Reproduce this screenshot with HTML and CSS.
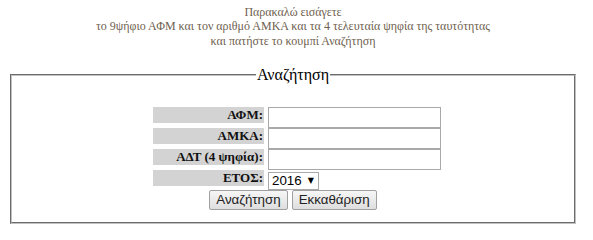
FILE: index.html
```html
<!DOCTYPE html>
<html lang="el">
<head>
<meta charset="utf-8">
<title>Αναζήτηση</title>
<link rel="stylesheet" href="styles.css">
</head>
<body>
<div class="page">
  <div class="intro">
    <div class="intro-line">Παρακαλώ εισάγετε</div>
    <div class="intro-line">το 9ψήφιο ΑΦΜ και τον αριθμό ΑΜΚΑ και τα 4 τελευταία ψηφία της ταυτότητας</div>
    <div class="intro-line intro-last">και πατήστε το κουμπί Αναζήτηση</div>
  </div>
  <fieldset class="search">
    <legend class="search-title">Αναζήτηση</legend>
    <form class="form-grid">
      <div class="label">ΑΦΜ:</div>
      <input class="field" type="text">
      <div class="label">ΑΜΚΑ:</div>
      <input class="field" type="text">
      <div class="label">ΑΔΤ (4 ψηφία):</div>
      <input class="field" type="text">
      <div class="label">ΕΤΟΣ:</div>
      <div class="select-cell">
        <span class="select-wrap">
          <select class="year">
            <option>2016</option>
            <option>2015</option>
            <option>2014</option>
          </select>
          <span class="select-arrow">▼</span>
        </span>
      </div>
      <div class="buttons">
        <button class="btn" type="submit">Αναζήτηση</button>
        <button class="btn" type="reset">Εκκαθάριση</button>
      </div>
    </form>
  </fieldset>
</div>
</body>
</html>
```
FILE: styles.css
```css
html, body {
  margin: 0;
  padding: 0;
  background: #ffffff;
}
body {
  padding: 5px 0 0 8px;
  font-family: "Liberation Serif", "Times New Roman", serif;
}
.page {
  width: 570px;
}
.intro {
  text-align: center;
  color: #6f5f50;
  font-size: 12px;
  line-height: 14px;
}
.intro-line {
  white-space: nowrap;
}
.intro-last {
  margin-top: 1px;
}
.search {
  margin: 18px 2px 0 2px;
  padding: 0 0 12px 0;
  border: 2px groove #c0c0c0;
  min-width: 0;
}
.search-title {
  margin: 0 auto;
  padding: 0 1px;
  font-size: 16px;
  line-height: 18px;
  color: #000000;
}
.form-grid {
  display: grid;
  grid-template-columns: 111px 173px;
  column-gap: 4px;
  justify-content: center;
  padding: 23px 0 0 8px;
  margin: 0;
}
.label {
  background: #d3d3d3;
  height: 16px;
  align-self: start;
  text-align: right;
  font-weight: bold;
  font-size: 13px;
  line-height: 16px;
  padding-right: 1px;
  color: #111111;
  white-space: nowrap;
}
.field {
  box-sizing: border-box;
  width: 173px;
  height: 21px;
  margin: 0;
  border: 1px solid #a9a9a9;
  border-radius: 0;
  padding: 1px 2px;
  font-family: "Liberation Sans", Arial, sans-serif;
  font-size: 13px;
  background: #ffffff;
}
.select-cell {
  padding-top: 1px;
  height: 18px;
}
.select-wrap {
  position: relative;
  display: inline-block;
}
.year {
  appearance: none;
  -webkit-appearance: none;
  box-sizing: border-box;
  width: 51px;
  height: 18px;
  margin: 0;
  padding: 0 0 0 3px;
  border: 1px solid #a9a9a9;
  border-radius: 0;
  background: #ffffff;
  font-family: "Liberation Sans", Arial, sans-serif;
  font-size: 13.33px;
  line-height: 16px;
  color: #000000;
  display: block;
}
.select-arrow {
  position: absolute;
  right: 5px;
  top: 4px;
  font-size: 8px;
  line-height: 10px;
  color: #000000;
  pointer-events: none;
  font-family: "DejaVu Sans", sans-serif;
}
.buttons {
  grid-column: 1 / 3;
  display: flex;
  justify-content: center;
  gap: 4px;
  padding-top: 1px;
  margin-left: -8px;
}
.btn {
  box-sizing: border-box;
  height: 20px;
  margin: 0;
  padding: 0 6px;
  border: 1px solid #a0a0a0;
  border-radius: 2px;
  background: linear-gradient(#f6f6f6, #dedede);
  font-family: "Liberation Sans", Arial, sans-serif;
  font-size: 13.33px;
  line-height: 16px;
  color: #222222;
}
```
